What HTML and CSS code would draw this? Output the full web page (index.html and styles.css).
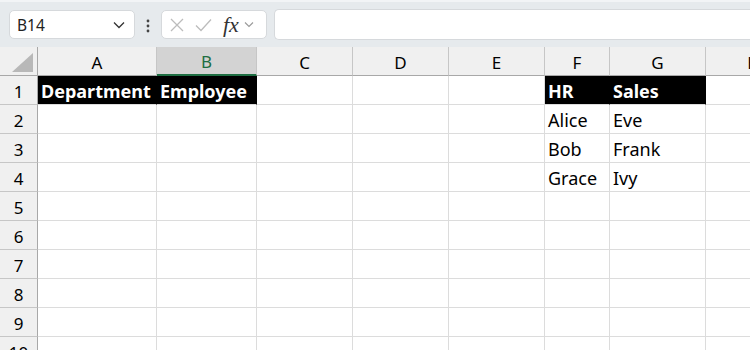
FILE: index.html
```html
<!DOCTYPE html>
<html lang="en">

<head>
    <meta charset="UTF-8">
    <title>Sheet</title>
    <link rel="stylesheet" href="styles.css">
</head>

<body>
    <!-- Formula toolbar -->
    <div class="toolbar">
        <div class="name-box">
            <span>B14</span>
            <svg class="chev" width="12" height="8" viewBox="0 0 12 8"><path d="M1 1.5 L6 6.5 L11 1.5" fill="none" stroke="#333" stroke-width="1.3"/></svg>
        </div>
        <div class="dots">
            <svg width="4" height="14" viewBox="0 0 4 14"><circle cx="2" cy="2" r="1.4" fill="#444"/><circle cx="2" cy="7" r="1.4" fill="#444"/><circle cx="2" cy="12" r="1.4" fill="#444"/></svg>
        </div>
        <div class="fx-box">
            <svg width="16" height="16" viewBox="0 0 16 16"><path d="M2 2 L14 14 M14 2 L2 14" stroke="#bcbcbc" stroke-width="1.3"/></svg>
            <svg width="18" height="16" viewBox="0 0 18 16"><path d="M2 8.5 L7 13.5 L17 2.5" fill="none" stroke="#bcbcbc" stroke-width="1.3"/></svg>
            <span class="fx">fx</span>
            <svg width="10" height="7" viewBox="0 0 10 7"><path d="M1 1.5 L5 5.5 L9 1.5" fill="none" stroke="#999" stroke-width="1.1"/></svg>
        </div>
        <div class="formula"></div>
    </div>

    <!-- Grid -->
    <div class="sheet">
        <div class="corner"><span class="tri"></span></div>
        <div class="col">A</div>
        <div class="col sel">B</div>
        <div class="col">C</div>
        <div class="col">D</div>
        <div class="col">E</div>
        <div class="col">F</div>
        <div class="col">G</div>
        <div class="col">H</div>

        <div class="row">1</div>
        <div class="cell head">Department</div>
        <div class="cell head">Employee</div>
        <div class="cell"></div>
        <div class="cell"></div>
        <div class="cell"></div>
        <div class="cell head">HR</div>
        <div class="cell head">Sales</div>
        <div class="cell"></div>

        <div class="row">2</div>
        <div class="cell"></div><div class="cell"></div><div class="cell"></div><div class="cell"></div><div class="cell"></div>
        <div class="cell">Alice</div><div class="cell">Eve</div><div class="cell"></div>

        <div class="row">3</div>
        <div class="cell"></div><div class="cell"></div><div class="cell"></div><div class="cell"></div><div class="cell"></div>
        <div class="cell">Bob</div><div class="cell">Frank</div><div class="cell"></div>

        <div class="row">4</div>
        <div class="cell"></div><div class="cell"></div><div class="cell"></div><div class="cell"></div><div class="cell"></div>
        <div class="cell">Grace</div><div class="cell">Ivy</div><div class="cell"></div>

        <div class="row">5</div>
        <div class="cell"></div><div class="cell"></div><div class="cell"></div><div class="cell"></div><div class="cell"></div><div class="cell"></div><div class="cell"></div><div class="cell"></div>
        <div class="row">6</div>
        <div class="cell"></div><div class="cell"></div><div class="cell"></div><div class="cell"></div><div class="cell"></div><div class="cell"></div><div class="cell"></div><div class="cell"></div>
        <div class="row">7</div>
        <div class="cell"></div><div class="cell"></div><div class="cell"></div><div class="cell"></div><div class="cell"></div><div class="cell"></div><div class="cell"></div><div class="cell"></div>
        <div class="row">8</div>
        <div class="cell"></div><div class="cell"></div><div class="cell"></div><div class="cell"></div><div class="cell"></div><div class="cell"></div><div class="cell"></div><div class="cell"></div>
        <div class="row">9</div>
        <div class="cell"></div><div class="cell"></div><div class="cell"></div><div class="cell"></div><div class="cell"></div><div class="cell"></div><div class="cell"></div><div class="cell"></div>
        <div class="row">10</div>
        <div class="cell"></div><div class="cell"></div><div class="cell"></div><div class="cell"></div><div class="cell"></div><div class="cell"></div><div class="cell"></div><div class="cell"></div>
    </div>
</body>

</html>
```

FILE: styles.css
```css
body {
    margin: 0;
    width: 750px;
    height: 350px;
    overflow: hidden;
    font-family: 'Noto Sans', sans-serif;
    color: #000;
    background: #fff;
}

/* Toolbar */
.toolbar {
    height: 47px;
    box-sizing: border-box;
    background: #e6eaed;
    border-top: 2px solid #f2f4f6;
    display: flex;
    align-items: center;
    padding: 0 0 0 9px;
}

.name-box {
    width: 126px;
    height: 29px;
    box-sizing: border-box;
    background: #fff;
    border: 1px solid #d6d9dc;
    border-radius: 5px;
    display: flex;
    align-items: center;
    justify-content: space-between;
    padding: 0 9px 0 7px;
    font-size: 15.5px;
    color: #222;
}

.dots {
    width: 26px;
    display: flex;
    justify-content: center;
    padding-top: 2px;
}

.fx-box {
    width: 106px;
    height: 29px;
    box-sizing: border-box;
    background: #fff;
    border: 1px solid #d6d9dc;
    border-radius: 5px;
    display: flex;
    align-items: center;
    gap: 9px;
    padding: 0 4px 0 7px;
}

.fx {
    font-family: 'Liberation Serif', serif;
    font-style: italic;
    font-size: 22px;
    color: #333;
    margin-left: 2px;
    margin-right: -4px;
}

.formula {
    flex: 1;
    height: 29px;
    margin-left: 7px;
    background: #fff;
    border: 1px solid #d6d9dc;
    border-right: none;
    border-radius: 5px 0 0 5px;
}

/* Sheet */
.sheet {
    display: grid;
    grid-template-columns: 38px 119px 100px 96px 96px 96px 65px 96px 96px;
    grid-auto-rows: 29px;
    font-size: 18px;
}

.corner, .col, .row {
    background: #f0f0f0;
    box-sizing: border-box;
    font-size: 17px;
}

.corner {
    position: relative;
    border-right: 1px solid #a8a8a8;
    border-bottom: 1px solid #a8a8a8;
}

.tri {
    position: absolute;
    right: 4px;
    bottom: 3px;
    width: 0;
    height: 0;
    border-left: 21px solid transparent;
    border-bottom: 19px solid #b8b8b8;
}

.col {
    border-right: 1px solid #c6c6c6;
    border-bottom: 1px solid #a8a8a8;
    display: flex;
    align-items: center;
    justify-content: center;
    padding-top: 2px;
}

.col.sel {
    background: #d3d3d3;
    border-bottom: 2px solid #1e6e42;
    color: #1e6e42;
}

.row {
    border-right: 1px solid #a8a8a8;
    border-bottom: 1px solid #c6c6c6;
    display: flex;
    align-items: center;
    justify-content: center;
    padding-top: 2px;
}

.cell {
    box-sizing: border-box;
    border-right: 1px solid #dcdcdc;
    border-bottom: 1px solid #dcdcdc;
    padding: 1px 3px 0;
    display: flex;
    align-items: center;
    white-space: nowrap;
}

.cell.head {
    background: #000;
    color: #fff;
    font-weight: bold;
    border-right-color: #000;
}
```
